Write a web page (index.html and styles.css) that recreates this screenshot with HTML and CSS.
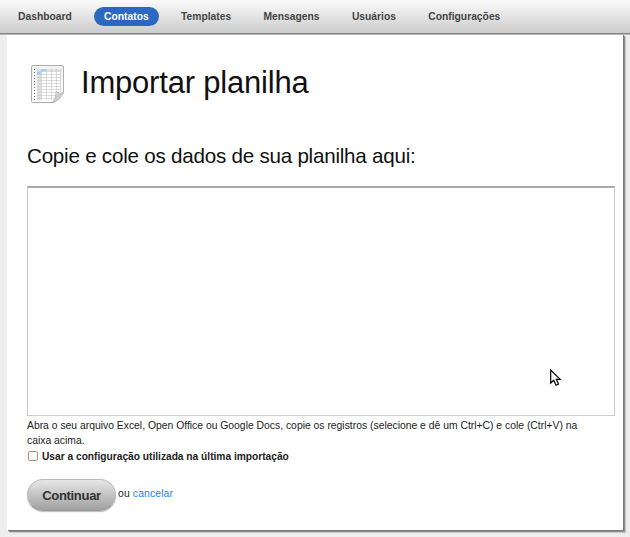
FILE: index.html
```
<!DOCTYPE html>
<html lang="pt-BR">
<head>
<meta charset="utf-8">
<title>Importar planilha</title>
<link rel="stylesheet" href="styles.css">
</head>
<body>
<nav class="nav">
  <a class="tab">Dashboard</a>
  <a class="tab active">Contatos</a>
  <a class="tab">Templates</a>
  <a class="tab">Mensagens</a>
  <a class="tab">Usuários</a>
  <a class="tab">Configurações</a>
</nav>
<main class="panel">
  <header class="head">
    <svg class="sheet" width="36" height="40" viewBox="0 0 36 40">
      <defs>
        <linearGradient id="paper" x1="0" y1="0" x2="0" y2="1"><stop offset="0" stop-color="#f2f2f2"/><stop offset="1" stop-color="#fdfdfd"/></linearGradient>
        <linearGradient id="fold" x1="0" y1="0" x2="1" y2="1"><stop offset="0" stop-color="#fff"/><stop offset=".45" stop-color="#c8c8c8"/><stop offset="1" stop-color="#f4f4f4"/></linearGradient>
      </defs>
      <path d="M3 2H34V29L24 39.2H3Q1.5 39.2 1.5 37V4Q1.5 2 3 2Z" fill="#bbb" opacity=".6"/>
      <path d="M3 1.5H32Q33.5 1.5 33.5 3V28.5L23.5 38.5H3Q1.5 38.5 1.5 37V3Q1.5 1.5 3 1.5Z" fill="url(#paper)" stroke="#b0b0b0"/>
      <path d="M4.5 5V36" stroke="#777" stroke-dasharray="1 2"/>
      <path d="M7 5H31V28L23 36H7Z" fill="#fff"/>
      <path d="M7 5H11V36H7ZM11 5H31V7H11Z" fill="#e0e0e0"/>
      <path d="M7.5 7.5H31M7 10.5H31M7 13.5H31M7 16.5H31M7 19.5H31M7 22.5H31M7 25.5H31M7 28.5H29M7 31.5H25M7 34.5H24M11.5 5V36M16.5 5V36M21.5 5V36M26.5 5V30M30.5 5V28" stroke="#c4c4c4" stroke-width=".6"/>
      <path d="M11 5H16V7.5H11ZM7 8H11V10.5H7Z" fill="#a9cdff"/>
      <path d="M33.5 28.5Q30 30.5 26 27.5Q26.5 34 22.5 38.5Q30 37 33.5 28.5Z" fill="url(#fold)" stroke="#aaa" stroke-width=".7"/>
    </svg>
    <h1>Importar planilha</h1>
  </header>
  <h2>Copie e cole os dados de sua planilha aqui:</h2>
  <div class="field"></div>
  <p class="help">Abra o seu arquivo Excel, Open Office ou Google Docs, copie os registros (selecione e dê um Ctrl+C) e cole (Ctrl+V) na<br>caixa acima.</p>
  <label class="option"><span class="check"></span><span>Usar a configuração utilizada na última importação</span></label>
  <div class="actions"><span class="button">Continuar</span><span class="or">ou <a class="cancel">cancelar</a></span></div>
</main>
<svg class="cursor" width="12" height="18" viewBox="0 0 12 18"><path d="M.7 1V14L3.7 11.2L6 16.2L8.5 15L6.3 10.3H10.2Z" fill="#fff" stroke="#000" stroke-width="1.2"/></svg>
</body>
</html>
```

FILE: styles.css
```
* { box-sizing: border-box; }
body {
  margin: 0;
  height: 537px;
  overflow: hidden;
  background: #eee;
  color: #222;
  font: 10.36px/15px "Liberation Sans", Arial, sans-serif;
}
.nav {
  position: relative;
  display: flex;
  align-items: flex-start;
  gap: 12.3px;
  height: 35px;
  padding: 7px 8px 0;
  background: linear-gradient(#fafafa, #cbcbcb);
  border-bottom: 1px solid #b8b8b8;
  box-shadow: inset 0 -1px #858585;
}
.tab {
  height: 19px;
  padding: 0 10px;
  border-radius: 10px;
  line-height: 20px;
  font-size: 10.3px;
  font-weight: bold;
  color: #444;
}
.active { background: #2c68c0; color: #fff; }
.panel {
  width: 616px;
  height: 496px;
  margin: -1px 0 0 7px;
  padding: 30px 9px 0 20px;
  background: #fff;
  box-shadow: 1px 1px #7c7c7c, 2px 2px #8c8c8c, 3px 3px 1px #ccc;
}
.head { display: flex; gap: 15px; height: 76px; padding-left: 3px; }
.sheet { display: block; }
h1, h2 { margin: 0; color: #111; font-weight: normal; }
h1 { font-size: 31px; line-height: 37px; letter-spacing: -.2px; }
h2 { height: 46px; font-size: 20.6px; line-height: 31px; letter-spacing: -.23px; }
.field {
  width: 588px;
  height: 230px;
  border: 1px solid #ccc;
  border-top: 2px solid #aaa;
}
.help { margin: 2px 0 0; white-space: nowrap; }
.option {
  display: flex;
  align-items: center;
  gap: 4px;
  height: 16px;
  padding-left: 1px;
  font-size: 10.2px;
  font-weight: bold;
}
.check {
  width: 10px;
  height: 10px;
  border: 1px solid #a98f85;
  border-radius: 2px;
  background: #fff;
}
.actions { display: flex; gap: 2px; margin-top: 15px; }
.button {
  width: 89px;
  height: 32px;
  border: 1px solid #bbb;
  border-bottom-color: #999;
  border-radius: 16px;
  background: linear-gradient(#e6e6e6, #a0a0a0);
  box-shadow: 0 1px 1px #bbb;
  color: #333;
  font-size: 13px;
  font-weight: bold;
  letter-spacing: -.3px;
  line-height: 31px;
  text-align: center;
}
.or { line-height: 30px; letter-spacing: .14px; }
.cancel { color: #0a8cf0; }
.cursor { position: absolute; left: 550px; top: 369px; }
```
